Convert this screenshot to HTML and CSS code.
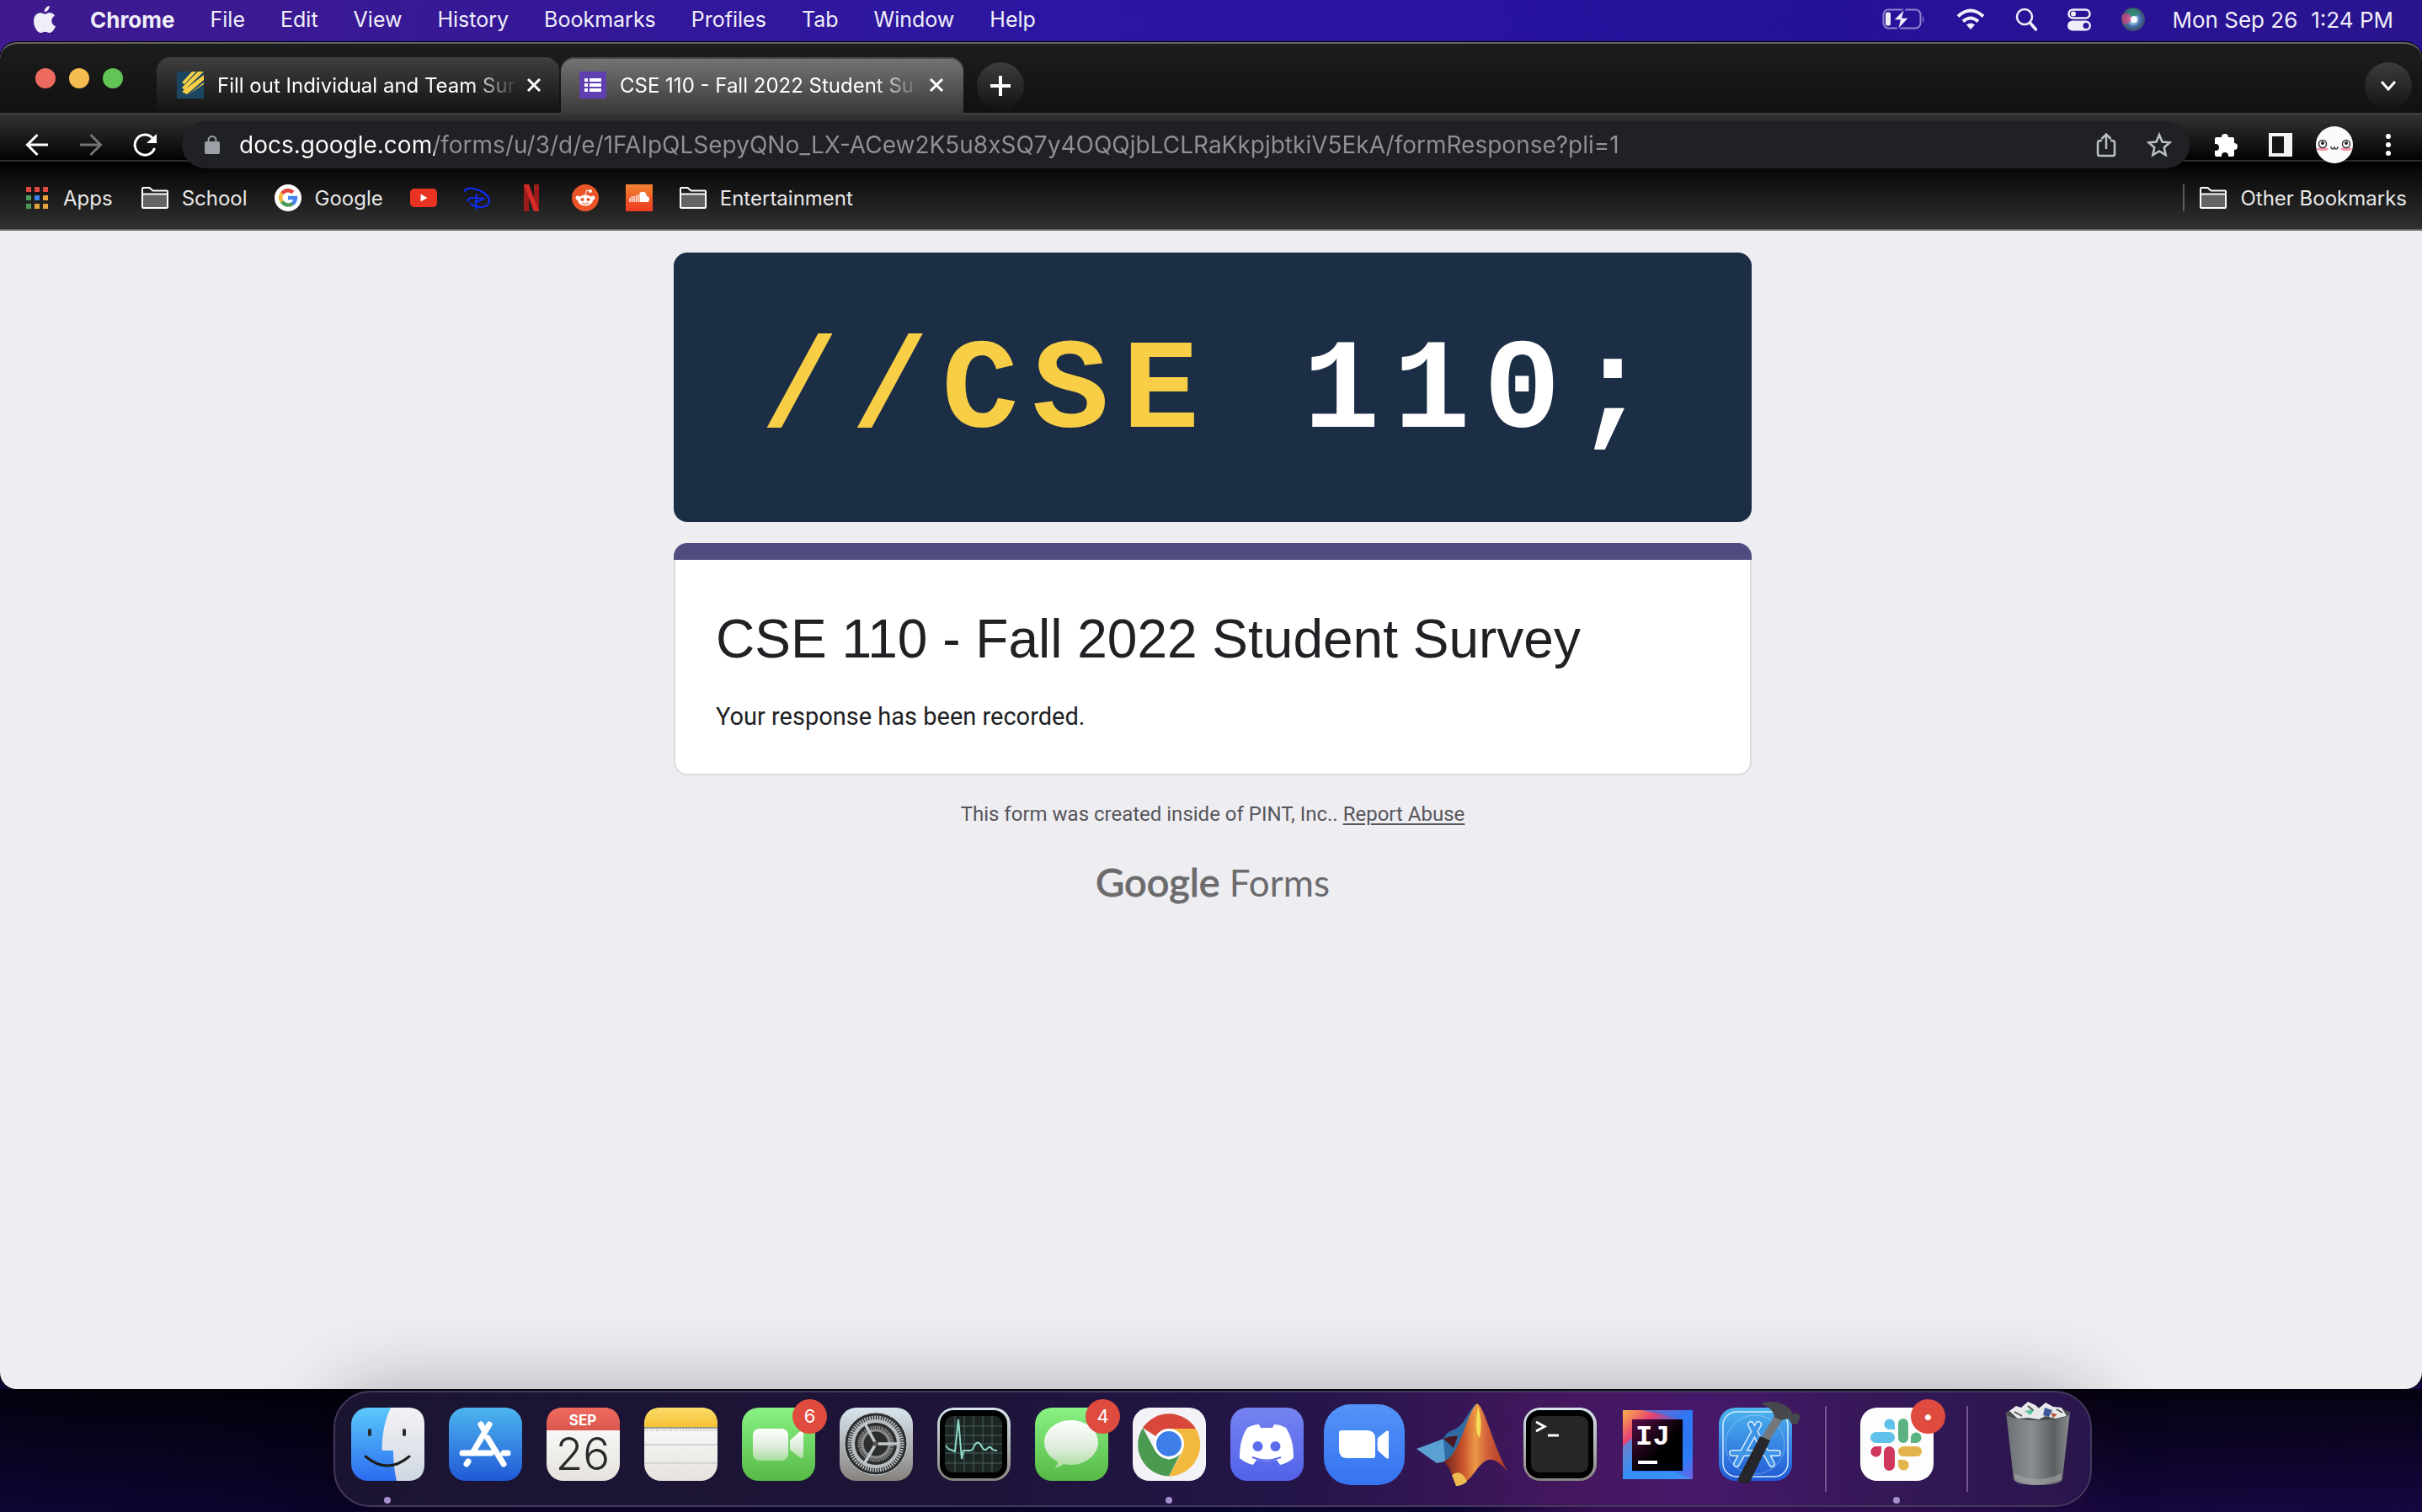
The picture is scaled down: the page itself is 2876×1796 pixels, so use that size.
FILE: index.html
```html
<!DOCTYPE html>
<html lang="en">
<head>
<meta charset="utf-8">
<title>CSE 110 - Fall 2022 Student Survey</title>
<link rel="stylesheet" href="styles.css">
</head>
<body>
<svg class="defs" aria-hidden="true">
  <defs>
    <linearGradient id="g-finder" x2="0" y2="1"><stop stop-color="#5bc9fb"/><stop offset="1" stop-color="#2b6cf0"/></linearGradient>
    <linearGradient id="g-silver" x2="0" y2="1"><stop stop-color="#f3f3f5"/><stop offset="1" stop-color="#d0d7e2"/></linearGradient>
    <linearGradient id="g-store" x2="0" y2="1"><stop stop-color="#4db5ee"/><stop offset="1" stop-color="#2059d6"/></linearGradient>
    <linearGradient id="g-red" x2="0" y2="1"><stop stop-color="#f06a5e"/><stop offset="1" stop-color="#d9584f"/></linearGradient>
    <linearGradient id="g-paper" x2="0" y2="1"><stop stop-color="#ffffff"/><stop offset="1" stop-color="#e6e3de"/></linearGradient>
    <linearGradient id="g-yellow" x2="0" y2="1"><stop stop-color="#fadb6a"/><stop offset="1" stop-color="#f5c136"/></linearGradient>
    <linearGradient id="g-green" x2="0" y2="1"><stop stop-color="#88f283"/><stop offset="1" stop-color="#57b946"/></linearGradient>
    <linearGradient id="g-cam" x2="0" y2="1"><stop stop-color="#ffffff"/><stop offset=".6" stop-color="#dcebd9"/><stop offset="1" stop-color="#a8dd9c"/></linearGradient>
    <linearGradient id="g-metal" x2="0" y2="1"><stop stop-color="#d9e6ee"/><stop offset="1" stop-color="#87827e"/></linearGradient>
    <linearGradient id="g-discord" x2="0" y2="1"><stop stop-color="#7583f0"/><stop offset="1" stop-color="#5262ea"/></linearGradient>
    <linearGradient id="g-zoom" x2="0" y2="1"><stop stop-color="#5294f8"/><stop offset="1" stop-color="#3573f0"/></linearGradient>
    <linearGradient id="g-matlab"><stop stop-color="#6b2320"/><stop offset=".3" stop-color="#c8512c"/><stop offset=".5" stop-color="#eb9a45"/><stop offset=".68" stop-color="#d2603a"/><stop offset="1" stop-color="#a83225"/></linearGradient>
    <linearGradient id="g-ij" x2="1" y2="1"><stop stop-color="#f9b54a"/><stop offset=".25" stop-color="#e83f72"/><stop offset=".5" stop-color="#2c6ff2"/><stop offset=".8" stop-color="#2a7cf5"/><stop offset="1" stop-color="#6f62e8"/></linearGradient>
    <linearGradient id="g-ijin" x2="1" y2="1"><stop stop-color="#560c45"/><stop offset=".6" stop-color="#000"/></linearGradient>
    <linearGradient id="g-can"><stop stop-color="#6d7073"/><stop offset=".4" stop-color="#8b8e90"/><stop offset=".75" stop-color="#5c5f61"/><stop offset="1" stop-color="#8a8d90"/></linearGradient>
    <linearGradient id="g-sound" x2="0" y2="1"><stop stop-color="#f28431"/><stop offset="1" stop-color="#ee3a22"/></linearGradient>
    <radialGradient id="g-siri"><stop stop-color="#fff"/><stop offset=".25" stop-color="#a9d4ee"/><stop offset=".6" stop-color="#4a6fae"/><stop offset="1" stop-color="#3a4a66"/></radialGradient>
    <symbol id="folder" viewBox="0 0 32 32"><path d="M1 27V5q0-1 1-1h7.500l4 3.500H30q1 0 1 1V27q0 1-1 1H2q-1 0-1-1z" fill="#1c1c1c" stroke="#fff" stroke-width="2"/><path d="M2 12h28v15H2z" fill="#636363"/><path d="M1 11.500h30" stroke="#fff" stroke-width="2"/></symbol>
    <symbol id="close" viewBox="0 0 20 20"><path d="M3 3l14 14M17 3L3 17" stroke="#fff" stroke-width="3"/></symbol>
  </defs>
</svg>

<header class="menubar">
  <nav class="menus" aria-label="Menu bar">
    <button class="menu apple" aria-label="Apple menu"><svg width="28" height="34" viewBox="0 0 28 34"><path d="M19.500 9c2.500 0 5 1.200 6.500 3.400-5.400 3.200-4.600 10.600 1 12.900-1.300 3.700-4.300 7.700-7.100 7.700-2 0-2.800-1.300-5.300-1.300S11.200 33 9.300 33C5.400 33 1 25.800 1 19.200 1 12.800 5 9.200 9 9.200c2.400 0 4.200 1.600 5.600 1.600 1.300 0 3-1.800 4.900-1.800zM19.700 1c.4 3.600-2.800 7.300-6 7.200C13.300 4.700 16.500 1.300 19.700 1z" fill="#f0eef8"/></svg></button>
    <button class="menu app-name">Chrome</button>
    <button class="menu">File</button>
    <button class="menu">Edit</button>
    <button class="menu">View</button>
    <button class="menu">History</button>
    <button class="menu">Bookmarks</button>
    <button class="menu">Profiles</button>
    <button class="menu">Tab</button>
    <button class="menu">Window</button>
    <button class="menu">Help</button>
  </nav>
  <div class="status">
    <svg width="52" height="26" viewBox="0 0 52 26"><rect x="1.500" y="1.500" width="44" height="22" rx="6" fill="none" stroke="#8f84cf" stroke-width="2"/><path d="M48 9q3 4 0 8z" fill="#8f84cf"/><rect x="4" y="4.500" width="6" height="16" rx="2" fill="#f0eef8"/><path d="M27 0L13 14h8l-3 12 14-15h-8z" fill="#f0eef8" stroke="#2a149b" stroke-width="1.500"/></svg>
    <svg width="34" height="26" viewBox="0 0 34 26"><g fill="none" stroke="#f0eef8" stroke-width="4"><path d="M2 9.500Q17-4.500 32 9.500"/><path d="M8 15.500q9-8 18 0"/></g><path d="M12 19.500q5-4 10 0l-5 5.500z" fill="#f0eef8"/></svg>
    <svg width="26" height="28" viewBox="0 0 26 28"><circle cx="11" cy="11" r="9" fill="none" stroke="#f0eef8" stroke-width="2.500"/><path d="M17.500 18l7 8" stroke="#f0eef8" stroke-width="3.500" stroke-linecap="round"/></svg>
    <svg width="28" height="28" viewBox="0 0 28 28"><rect x="1.500" y="2.500" width="25" height="10" rx="5" fill="none" stroke="#f0eef8" stroke-width="2.500"/><circle cx="7" cy="7.500" r="3" fill="#f0eef8"/><rect y="15.500" width="28" height="12" rx="6" fill="#f0eef8"/><circle cx="22" cy="21.500" r="3.500" fill="#2a149b"/></svg>
    <svg width="28" height="28" viewBox="0 0 28 28"><circle cx="14" cy="14" r="14" fill="url(#g-siri)"/><path d="M1 9Q8 3 14 14 7 20 3 20 0 15 1 9z" fill="#d0447a" opacity=".75"/><path d="M6 3q10-5 17 4-6 2-9 7z" fill="#2c8a6c" opacity=".8"/><circle cx="15" cy="14" r="4" fill="#fff" opacity=".9"/></svg>
    <time class="clock"><span>Mon Sep 26</span><span>1:24 PM</span></time>
  </div>
</header>

<div class="window">
  <div class="tabstrip">
    <div class="lights"><button class="light red" aria-label="Close window"></button><button class="light amber" aria-label="Minimise"></button><button class="light green" aria-label="Zoom"></button></div>
    <div class="tab">
      <svg width="32" height="32" viewBox="0 0 32 32"><path d="M0 0h32v32H0z" fill="#1a4661"/><path d="M18 0h5L9 15l-3-2zM25 0h7L9 22l-3-3zM32 4v6L12 27l-6-3zM32 13v2L14 27z" fill="#f7ce46"/></svg>
      <button class="tab-title">Fill out Individual and Team Sur</button>
      <button class="icon-btn" aria-label="Close tab"><svg width="20" height="20"><use href="#close"/></svg></button>
    </div>
    <div class="tab active">
      <svg width="32" height="32" viewBox="0 0 32 32"><path d="M0 0h32v32H0z" fill="#603fb0"/><path d="M6 8h4v4H6zM6 14h4v4H6zM6 20h4v4H6zM12 8h14v4H12zM12 14h14v4H12zM12 20h14v4H12z" fill="#fff"/></svg>
      <button class="tab-title">CSE 110 - Fall 2022 Student Su</button>
      <button class="icon-btn" aria-label="Close tab"><svg width="20" height="20"><use href="#close"/></svg></button>
    </div>
    <button class="round new-tab" aria-label="New tab"><svg width="24" height="24" viewBox="0 0 24 24"><path d="M12 0v24M0 12h24" stroke="#fff" stroke-width="4"/></svg></button>
    <button class="round tab-search" aria-label="Search tabs"><svg width="20" height="14" viewBox="0 0 20 14"><path d="M2 2l8 9 8-9" fill="none" stroke="#fff" stroke-width="3"/></svg></button>
  </div>

  <div class="toolbar">
    <div class="nav-buttons">
      <button class="icon-btn" aria-label="Back"><svg width="28" height="28" viewBox="0 0 28 28"><path d="M27 14H3M14.500 2l-12 12 12 12" fill="none" stroke="#fff" stroke-width="3"/></svg></button>
      <button class="icon-btn" aria-label="Forward"><svg width="28" height="28" viewBox="0 0 28 28"><path d="M1 14h24M13.500 2l12 12-12 12" fill="none" stroke="#757575" stroke-width="3"/></svg></button>
      <button class="icon-btn" aria-label="Reload"><svg width="28" height="28" viewBox="0 0 28 28"><path d="M25.500 18A12 12 0 1 1 23 6" fill="none" stroke="#fff" stroke-width="3"/><path d="M28 1v11H16z" fill="#fff"/></svg></button>
    </div>
    <div class="omnibox">
      <svg width="18" height="22" viewBox="0 0 18 22"><rect y="7" width="18" height="15" rx="2" fill="#9aa0a6"/><path d="M4.500 8V5.500a4.500 4.500 0 0 1 9 0V8" fill="none" stroke="#9aa0a6" stroke-width="2"/></svg>
      <input class="url" type="text" aria-label="Address" value="docs.google.com/forms/u/3/d/e/1FAIpQLSepyQNo_LX-ACew2K5u8xSQ7y4OQQjbLCLRaKkpjbtkiV5EkA/formResponse?pli=1">
      <button class="icon-btn" aria-label="Share"><svg width="24" height="30" viewBox="0 0 24 30"><path d="M7 10H5q-3 0-3 3v13q0 2 2 2h16q2 0 2-2V13q0-3-3-3h-2M12 20V3M6.500 8L12 2.500 17.500 8" fill="none" stroke="#bdc1c6" stroke-width="2.500"/></svg></button>
      <button class="icon-btn" aria-label="Bookmark this tab"><svg width="30" height="30" viewBox="0 0 30 30"><path d="M15 3l3.500 8.500 9 .8-6.800 6 2 8.900L15 22.500l-7.700 4.700 2-8.900-6.800-6 9-.8z" fill="none" stroke="#bdc1c6" stroke-width="2.500"/></svg></button>
    </div>
    <div class="tools">
      <button class="icon-btn" aria-label="Extensions"><svg width="28" height="28" viewBox="0 0 28 28"><path d="M8 5a4 4 0 0 1 8 0h5q2 0 2 2v5a4 4 0 0 1 0 8v6q0 2-2 2h-5v-1a4 4 0 0 0-8 0v1H2q-2 0-2-2v-5h1a4 4 0 0 0 0-8H0V7q0-2 2-2z" fill="#fff"/></svg></button>
      <button class="icon-btn" aria-label="Side panel"><svg width="28" height="28" viewBox="0 0 28 28"><path d="M0 0h28v28H0z" fill="#f1f3f4"/><path d="M4 4h14v20H4z" fill="#151515"/></svg></button>
      <button class="icon-btn" aria-label="Profile"><svg width="44" height="44" viewBox="0 0 44 44"><circle cx="22" cy="22" r="22" fill="#fbfafa"/><g fill="#f597ab"><ellipse cx="8" cy="27" rx="7" ry="2"/><ellipse cx="36" cy="27" rx="7" ry="2"/></g><g fill="#fff" stroke="#333" stroke-width="1.500"><circle cx="8" cy="21" r="4.500"/><circle cx="36" cy="21" r="4.500"/></g><circle cx="8" cy="20" r="2" fill="#222"/><circle cx="36" cy="20" r="2" fill="#222"/><path d="M18 24q0 3 2 3t2-3q0 3 2 3t2-3" fill="none" stroke="#444" stroke-width="1.500"/></svg></button>
      <button class="icon-btn" aria-label="Menu"><svg width="6" height="28" viewBox="0 0 6 28"><g fill="#fff"><circle cx="3" cy="4" r="3"/><circle cx="3" cy="14" r="3"/><circle cx="3" cy="24" r="3"/></g></svg></button>
    </div>
  </div>

  <nav class="bookmarks" aria-label="Bookmarks">
    <a class="bookmark" href="#"><svg width="28" height="26" viewBox="0 0 28 26"><path d="M0 0h6v6H0zM10 0h6v6h-6zM20 0h6v6h-6z" fill="#e2483d"/><path d="M0 10h6v6H0zM0 20h6v6H0z" fill="#4b9b57"/><path d="M10 10h6v6h-6z" fill="#3f82ee"/><path d="M20 10h6v6h-6zM10 20h6v6h-6zM20 20h6v6h-6z" fill="#e5a23a"/></svg>Apps</a>
    <a class="bookmark" href="#"><svg width="32" height="32"><use href="#folder"/></svg>School</a>
    <a class="bookmark" href="#"><svg width="32" height="32" viewBox="0 0 32 32"><circle cx="16" cy="16" r="16" fill="#fff"/><g fill="none" stroke-width="4.500"><path d="M9 11a8.800 8.800 0 0 1 13-1.500" stroke="#e2483d"/><path d="M9 21a9 9 0 0 1 0-10.500" stroke="#f3b93b"/><path d="M22 22.500A9 9 0 0 1 8.800 20.500" stroke="#4b9b57"/><path d="M16 16h9q0 4-3.500 7" stroke="#4685f0"/></g></svg>Google</a>
    <a class="bookmark" href="#" aria-label="YouTube"><svg width="32" height="32" viewBox="0 0 32 32"><rect y="5" width="32" height="22" rx="5" fill="#ea3323"/><path d="M12.500 11.500v9l8-4.500z" fill="#fff"/></svg></a>
    <a class="bookmark" href="#" aria-label="Disney+"><svg width="32" height="32" viewBox="0 0 32 32"><path d="M1 8C3 2 15 5 22 9c11 7 11 17-2 18-5 0-9-1-12-4M5 20q-1-4 6-4 6 0 13 1M15 12q-2 8 0 17M15 21l6-3" fill="none" stroke="#0f2cf0" stroke-width="2.200" stroke-linecap="round"/></svg></a>
    <a class="bookmark" href="#" aria-label="Netflix"><svg width="32" height="32" viewBox="0 0 32 32"><path d="M7 0h6v32H7zM19 0h6v32h-6z" fill="#9c1c1c"/><path d="M7 0h6l12 32h-6z" fill="#d42a28"/></svg></a>
    <a class="bookmark" href="#" aria-label="Reddit"><svg width="32" height="32" viewBox="0 0 32 32"><circle cx="16" cy="16" r="16" fill="#ec5528"/><g fill="#fff"><ellipse cx="16" cy="19" rx="9" ry="6.500"/><circle cx="7" cy="16" r="2.500"/><circle cx="25" cy="16" r="2.500"/><circle cx="22" cy="8" r="2"/></g><path d="M16 13l1.500-6 4 1" fill="none" stroke="#fff"/><g fill="#ec5528"><circle cx="12.500" cy="18" r="2"/><circle cx="19.500" cy="18" r="2"/></g><path d="M12 22q4 3 8 0" fill="none" stroke="#ec5528"/></svg></a>
    <a class="bookmark" href="#" aria-label="SoundCloud"><svg width="32" height="32" viewBox="0 0 32 32"><path d="M0 0h32v32H0z" fill="url(#g-sound)"/><path d="M5 21v-5M7.500 21v-7M10 21v-7M12.500 21v-8M15 21v-9" stroke="#fff" stroke-width="1.300"/><path d="M16.500 21V10q7-4 8.500 4 3 0 3 3.500T25 21z" fill="#fff"/></svg></a>
    <a class="bookmark" href="#"><svg width="32" height="32"><use href="#folder"/></svg>Entertainment</a>
    <a class="bookmark other" href="#"><svg width="32" height="32"><use href="#folder"/></svg>Other Bookmarks</a>
  </nav>

  <main class="page">
    <div class="banner"><p class="banner-text"><span>//CSE</span> 110;</p></div>
    <section class="card">
      <div class="stripe"></div>
      <div class="card-body">
        <h1>CSE 110 - Fall 2022 Student Survey</h1>
        <p>Your response has been recorded.</p>
      </div>
    </section>
    <p class="notice">This form was created inside of PINT, Inc.. <a href="#">Report Abuse</a></p>
    <p class="logo"><span class="brand">Google</span> Forms</p>
  </main>
</div>

<nav class="dock" aria-label="Dock">
  <button class="app running" aria-label="Finder"><svg viewBox="0 0 116 116"><rect x="15" y="14" width="87" height="87" rx="20" fill="url(#g-finder)"/><path d="M62 14h20q20 0 20 20v47q0 20-20 20H69Q65 85 65 65H53q-2 0-1.500-3Q52 34 62 14z" fill="url(#g-silver)"/><path d="M37 41v5M78 41v5" stroke="#2a2a2a" stroke-width="4" stroke-linecap="round"/><path d="M32 72q26 22 52 0" fill="none" stroke="#1c1c1c" stroke-width="3" stroke-linecap="round"/></svg></button>
  <button class="app" aria-label="App Store"><svg viewBox="0 0 116 116"><rect x="15" y="14" width="87" height="87" rx="20" fill="url(#g-store)"/><g stroke="#fff" stroke-width="7" stroke-linecap="round"><path d="M63 34L43 68M38 78l-2 3M53 34l4 7M61 50l19 31M31 68h34M80 68h5"/></g></svg></button>
  <button class="app" aria-label="Calendar"><svg viewBox="0 0 116 116"><rect x="15" y="14" width="87" height="87" rx="20" fill="url(#g-paper)"/><path d="M15 41v-7q0-20 20-20h47q20 0 20 20v7z" fill="url(#g-red)"/><text x="58" y="35" class="cal-month">SEP</text><text x="58" y="88" class="cal-day">26</text></svg></button>
  <button class="app" aria-label="Notes"><svg viewBox="0 0 116 116"><rect x="15" y="14" width="87" height="87" rx="20" fill="url(#g-paper)"/><path d="M15 37v-3q0-20 20-20h47q20 0 20 20v3z" fill="url(#g-yellow)"/><path d="M15 38h87" stroke="#9d9a92" stroke-width="2"/><path d="M15 41h87" stroke="#b5b3ae" stroke-width="1.500" stroke-dasharray="1.500 2"/><path d="M15 58h87M15 80h87" stroke="#d3d3d5" stroke-width="2"/></svg></button>
  <button class="app" aria-label="FaceTime"><svg viewBox="0 0 116 116"><rect x="15" y="14" width="87" height="87" rx="20" fill="url(#g-green)"/><rect x="28" y="39" width="42" height="38" rx="8" fill="url(#g-cam)"/><path d="M72 53l11-10q5-3 5 2v27q0 4-5 1l-11-9z" fill="url(#g-cam)"/></svg><span class="badge">6</span></button>
  <button class="app" aria-label="System Preferences"><svg viewBox="0 0 116 116"><rect x="15" y="14" width="87" height="87" rx="20" fill="url(#g-metal)"/><circle cx="58" cy="57" r="37" fill="#2b2d2e"/><g fill="none"><circle cx="58" cy="57" r="31" stroke="#b9bdbf" stroke-width="5" stroke-dasharray="1.700 1.300"/><circle cx="58" cy="57" r="27" stroke="#b9bdbf" stroke-width="4"/><circle cx="58" cy="57" r="19" stroke="#8a8c8d" stroke-width="5" stroke-dasharray="1.500 1"/><circle cx="58" cy="57" r="16" stroke="#8a8c8d" stroke-width="3"/></g><path d="M58 57h27M58 57L45 33M58 57L44 81" stroke="#c3c7c9" stroke-width="3.500"/><circle cx="58" cy="57" r="3" fill="#555"/><circle cx="58" cy="57" r="37" fill="none" stroke="#c9ced0" stroke-width="1"/></svg></button>
  <button class="app" aria-label="Activity Monitor"><svg viewBox="0 0 116 116"><rect x="15" y="14" width="87" height="87" rx="20" fill="url(#g-metal)"/><rect x="18" y="17" width="80" height="81" rx="16" fill="#000"/><rect x="24" y="24" width="68" height="67" rx="9" fill="#1d2625"/><path d="M36 24v67M47 24v67M58 24v67M69 24v67M80 24v67M24 36h68M24 47h68M24 57h68M24 68h68M24 80h68" stroke="#47615a"/><path d="M25 59l3 4 8 3 4-38 4 47 2-10h8q3 0 5-6 4-7 8 0 3 6 6 5 4-5 6-2t7 3" fill="none" stroke="#8fd9c7" stroke-width="2"/></svg></button>
  <button class="app" aria-label="Messages"><svg viewBox="0 0 116 116"><rect x="15" y="14" width="87" height="87" rx="20" fill="url(#g-green)"/><path d="M58 29c18 0 32 12 32 26S76 82 58 82q-5 0-9-1-5 4-11 5 4-4 4-8C32 73 26 65 26 55c0-14 14-26 32-26z" fill="url(#g-cam)"/></svg><span class="badge">4</span></button>
  <button class="app running" aria-label="Chrome"><svg viewBox="0 0 116 116"><rect x="15" y="14" width="87" height="87" rx="20" fill="#f3f2f6"/><path d="M58 58L27 38a37.500 37.500 0 0 1 63 1z" fill="#d8473a"/><path d="M58 39h32a37.500 37.500 0 0 1-32 56.500L74 66z" fill="#f3b93f"/><path d="M27 38l15 28 16 10 14-8-14 27.500A37.500 37.500 0 0 1 27 38z" fill="#4b9a52"/><circle cx="58" cy="57" r="18" fill="#fff"/><circle cx="58" cy="57" r="15" fill="#3d7ee8"/></svg></button>
  <button class="app" aria-label="Discord"><svg viewBox="0 0 116 116"><rect x="15" y="14" width="87" height="87" rx="20" fill="url(#g-discord)"/><path d="M35 38q7-4 14-4l2 4h14l2-4q7 0 14 4c7 11 9 22 9 36q-7 6-16 8l-4-6q-12 3-24 0l-4 6q-9-2-16-8c0-14 2-25 9-36z" fill="#fff"/><path d="M41 73q17 7 34 0" stroke="#5c6bec" stroke-width="2" fill="none"/><circle cx="47.500" cy="60" r="6" fill="#5c6bec"/><circle cx="68.500" cy="60" r="6" fill="#5c6bec"/></svg></button>
  <button class="app" aria-label="Zoom"><svg viewBox="0 0 116 116"><rect x="10" y="10" width="96" height="96" rx="32" fill="url(#g-zoom)"/><path d="M31 41h30q10 0 10 10v20q0 3-3 3H38q-10 0-10-10V44q0-3 3-3zM74 50l10-8q3-2 3 1v30q0 3-3 1l-10-9q-1-8 0-15z" fill="#fff"/></svg></button>
  <button class="app" aria-label="MATLAB"><svg viewBox="0 0 116 116"><path d="M4 63l32-12 12-1L38 78l-10 2z" fill="#5aa0d3"/><path d="M36 51q4-9 13-11C62 35 68 12 76 9L56 66 38 78z" fill="#2e6ca4"/><path d="M36 51q9-4 17-3l-5 14z" fill="#4a1820"/><path d="M76 9c9 4 19 50 36 81-10-12-18-18-27-12-12 8-15 25-34 29Q44 84 36 78C56 72 64 18 76 9z" fill="url(#g-matlab)"/><path d="M46 94q12-8 18 8-6 5-13 5z" fill="#efbd4f"/><path d="M77 12q6 18 2 38-7-6-2-38z" fill="#f5dd55"/></svg></button>
  <button class="app" aria-label="Terminal"><svg viewBox="0 0 116 116"><rect x="15" y="14" width="87" height="87" rx="20" fill="url(#g-metal)"/><rect x="18" y="17" width="80" height="81" rx="16" fill="#000"/><rect x="24" y="24" width="68" height="67" rx="9" fill="#262626"/><path d="M30 31l10 5.500L30 42M44 47h13" fill="none" stroke="#fff" stroke-width="3"/></svg></button>
  <button class="app" aria-label="IntelliJ IDEA"><svg viewBox="0 0 116 116"><path d="M17 17h83v82H17z" fill="url(#g-ij)"/><path d="M40 17h60v40L88 28z" fill="#2f7bf5" opacity=".7"/><path d="M17 60l11-10v40h50l22 9H17z" fill="#3b9cf4" opacity=".7"/><path d="M28 28h60v61H28z" fill="url(#g-ijin)"/><path d="M35 77h23v4H35z" fill="#fff"/><text x="32" y="58" class="ij">IJ</text></svg></button>
  <button class="app" aria-label="Xcode"><svg viewBox="0 0 116 116"><rect x="15" y="14" width="87" height="87" rx="20" fill="url(#g-store)"/><g fill="none" stroke="#d5ecff"><rect x="20" y="19" width="77" height="77" rx="16" stroke-width="1.500"/><circle cx="58" cy="58" r="35" opacity=".4"/></g><g stroke="#d5ecff" stroke-width="8" stroke-linecap="round"><path d="M62 34L36 81M53 34l25 47M31 68h54"/></g><g stroke="#3f94e6" stroke-width="5" stroke-linecap="round"><path d="M62 34L36 81M53 34l25 47M31 68h54"/></g><path d="M82 22l10 4-18 29-9-4z" fill="#74777c"/><path d="M64 48l12 5-24 49q-7 6-15-2z" fill="#25262b"/><path d="M64 9q22-6 36 7l3 6 4-2 5 4-4 10-7-1-3-6-9 2-8-4q-1-10-17-16z" fill="#46484d"/></svg></button>
  <hr class="divider">
  <button class="app running" aria-label="Slack"><svg viewBox="0 0 116 116"><rect x="15" y="14" width="87" height="87" rx="20" fill="#fdfdfd"/><path d="M56 40h-6a6.300 6.300 0 1 1 6-6z" fill="#60c1ea"/><rect x="27" y="43" width="29" height="13" rx="6.500" fill="#60c1ea"/><rect x="60" y="27" width="12" height="29" rx="6" fill="#5bb381"/><path d="M75 56v-6a6.300 6.300 0 1 1 6 6z" fill="#5bb381"/><path d="M40 60v6a6.300 6.300 0 1 1-6-6z" fill="#cf375c"/><rect x="43" y="60" width="13" height="29" rx="6.500" fill="#cf375c"/><rect x="60" y="60" width="28" height="12" rx="6" fill="#e3b34c"/><path d="M60 76h6a6.300 6.300 0 1 1-6 6z" fill="#e3b34c"/></svg><span class="badge">•</span></button>
  <hr class="divider">
  <button class="app" aria-label="Bin"><svg viewBox="0 0 116 116"><path d="M20 19h76l-9 80q-2 7-29 7t-29-7z" fill="url(#g-can)"/><ellipse cx="58" cy="21" rx="38" ry="8" fill="#4b4e50"/><path d="M24 18l8-6 6 2 8-7 9 4 4 4 8-7 9 5 10 1 6 10-13 3-12-3-8 4-13-2-12 1z" fill="#e9e9ea"/><path d="M42 18l12-2-5 7z" fill="#59c3a0"/><path d="M66 14l9 3-4 8-7-2z" fill="#3d5b9a"/><path d="M73 20l8 2-5 4z" fill="#b4553a"/><path d="M30 19l9 5M46 12l6 5M80 16l7 4" stroke="#555" stroke-width="2"/><path d="M30 92q28 14 56 0l-1 8q-27 11-54 0z" fill="#a3a6a8" opacity=".6"/></svg></button>
</nav>
</body>
</html>
```
FILE: styles.css
```css
* { box-sizing: border-box; }

html, body { height: 100%; }

body {
  margin: 0;
  display: flex;
  flex-direction: column;
  align-items: stretch;
  overflow: hidden;
  font-family: Inter, "Liberation Sans", sans-serif;
  color: #fff;
  background:
    linear-gradient(90deg, #3f1a8e 0, #2b16a2 45%, #25129a 75%, #2a148f 100%) top / 100% 120px no-repeat,
    linear-gradient(rgba(0, 0, 0, 0.75), transparent) bottom / 100% 146px no-repeat,
    linear-gradient(90deg, #0f0534 0, #0c042a 14%, #0d0538 60%, #421063 66%, #3b1160 78%, #14073e 88%, #150640 100%);
}

button {
  margin: 0;
  padding: 0;
  border: 0;
  background: none;
  color: inherit;
  font: inherit;
}

svg { display: block; flex: none; }
p, h1 { margin: 0; }

.defs { position: absolute; width: 0; height: 0; }

/* Menu bar */
.menubar {
  flex: none;
  display: flex;
  justify-content: space-between;
  height: 50px;
  padding: 0 34px 4px 39px;
  font-size: 25px;
  color: #f0eef8;
}

.menus { display: flex; align-items: center; gap: 42px; }
.menu.apple { margin-right: -2px; }
.app-name { font-size: 26px; font-weight: 700; }
.status { display: flex; align-items: center; gap: 36px; }
.clock { display: flex; gap: 16px; margin-left: -4px; font-size: 26px; }

/* Browser window */
.window {
  flex: 1;
  display: flex;
  flex-direction: column;
  border-top: 2px solid #646464;
  border-radius: 20px;
  overflow: hidden;
  background: #eeedf2;
  box-shadow: 0 0 0 1px #000;
}

.tabstrip {
  flex: none;
  display: flex;
  align-items: flex-end;
  height: 84px;
  padding: 0 12px 0 42px;
  border-bottom: 2px solid #404040;
  background: linear-gradient(#1d1d1d, #111);
  font-size: 24px;
}

.lights { display: flex; gap: 16px; margin-right: 40px; align-self: center; }
.light { width: 24px; height: 24px; border-radius: 50%; }
.light.red { background: #ec6a5e; }
.light.amber { background: #f4bd4f; }
.light.green { background: #61c454; }

.tab {
  display: flex;
  align-items: center;
  width: 478px;
  height: 66px;
  padding: 0 20px 0 24px;
  border-radius: 16px 16px 0 0;
  background: linear-gradient(#3f3f3f, #121212);
}

.tab.active {
  height: 68px;
  margin: 0 0 -2px 2px;
  padding: 0 22px 2px 22px;
  box-shadow: inset 0 2px #4a4a4a;
  background: linear-gradient(#757575, #383838);
}

.tab-title {
  flex: 1;
  margin: 0 8px 0 16px;
  white-space: nowrap;
  text-align: left;
  -webkit-mask-image: linear-gradient(90deg, #000 84%, transparent);
  mask-image: linear-gradient(90deg, #000 84%, transparent);
}

.icon-btn { display: grid; place-items: center; }

.round {
  display: grid;
  place-items: center;
  width: 56px;
  height: 56px;
  margin-bottom: 4px;
  border-radius: 50%;
  background: linear-gradient(#3c3c3c, #141414);
}

.new-tab { margin-left: 16px; }
.tab-search { margin-left: auto; }

/* Toolbar */
.toolbar {
  flex: none;
  display: flex;
  align-items: center;
  height: 72px;
  padding: 0 37px 0 30px;
  background:
    linear-gradient(#2b2b2b, #2b2b2b) 0 54px / 100% 2px no-repeat,
    linear-gradient(#333 0, #000 56px, #0c0c0c);
}

.nav-buttons { display: flex; gap: 36px; margin-right: 30px; }

.omnibox {
  flex: 1;
  display: flex;
  align-items: center;
  height: 56px;
  padding: 0 21px 0 27px;
  border-radius: 28px;
  background: #202124;
  gap: 36px;
}

.url {
  flex: 1;
  min-width: 0;
  height: 56px;
  margin-left: -13px;
  padding: 0;
  border: 0;
  outline: 0;
  font: 28px Inter, "Liberation Sans", sans-serif;
  color: transparent;
  background: linear-gradient(90deg, #fff 232px, #8f9194 232px);
  -webkit-background-clip: text;
  background-clip: text;
}

.tools { display: flex; align-items: center; gap: 36px; margin-left: 30px; }
.tools .icon-btn:nth-child(3) { margin: 0 3px 0 -8px; }

/* Bookmarks bar */
.bookmarks {
  flex: none;
  display: flex;
  align-items: center;
  gap: 32px;
  height: 66px;
  padding: 0 18px 10px 31px;
  border-bottom: 2px solid #66636a;
  background: linear-gradient(#0c0c0c, #303030);
  font-size: 24px;
}

.bookmark {
  display: flex;
  align-items: center;
  gap: 16px;
  color: #e8e8e8;
  text-decoration: none;
}

.bookmark:first-child { padding-right: 2px; }
.other { margin-left: auto; padding-left: 18px; border-left: 2px solid #5c5c5c; }

/* Form page */
.page {
  flex: 1;
  display: flex;
  flex-direction: column;
  align-items: center;
  padding: 26px 0 0 4px;
  color: #202124;
  font-family: Roboto, "Liberation Sans", sans-serif;
}

.banner {
  display: flex;
  justify-content: center;
  width: 1280px;
  max-width: 100%;
  padding: 77px 0 63px;
  border-radius: 16px;
  background: #1c2d46;
  color: #fff;
}

.banner-text {
  font: 700 152px "Liberation Mono", monospace;
  letter-spacing: 16px;
  line-height: 180px;
  white-space: pre;
}

.banner-text span { color: #f7ce46; }

.card {
  width: 1280px;
  max-width: 100%;
  margin-top: 25px;
  border-radius: 16px;
  overflow: hidden;
  background: #dadae0;
}

.stripe { height: 20px; background: #4f4d7f; }

.card-body {
  margin: 0 2px 2px;
  padding: 54px 48px 48px;
  border-radius: 0 0 14px 14px;
  background: #fff;
}

.card h1 {
  font: 400 64px/80px "Liberation Sans", Arial, sans-serif;
}

.card p { margin-top: 32px; font-size: 29px; line-height: 40px; }

.notice { margin-top: 26px; font-size: 24px; line-height: 40px; color: #56565a; }
.notice a { color: inherit; text-underline-offset: 3px; }

.logo {
  margin-top: 30px;
  font: 400 44px/60px Lato, "Open Sans", sans-serif;
  color: #6b6b6e;
}

.brand { font-size: 47px; -webkit-text-stroke: 1px #6b6b6e; }

/* Dock */
.dock {
  position: relative;
  flex: none;
  align-self: center;
  display: flex;
  align-items: flex-start;
  height: 138px;
  margin: 2px 0 6px 4px;
  padding: 4px;
  border: 2px solid #44395c;
  border-radius: 44px;
  background: linear-gradient(90deg, #1b1431 0, #1d1438 35%, #25154a 56%, #44175f 70%, #46186a 78%, #351858 88%, #29164c 100%);
  box-shadow: 0 0 90px rgba(0, 0, 0, 0.3);
}

.app { position: relative; width: 116px; height: 116px; }
.app svg { width: 116px; height: 116px; }

.running::after {
  content: "";
  position: absolute;
  left: 54px;
  bottom: -12px;
  width: 8px;
  height: 8px;
  border-radius: 50%;
  background: #a590cc;
}

.badge {
  position: absolute;
  top: 4px;
  right: 0;
  width: 41px;
  height: 41px;
  border-radius: 50%;
  background: #df4b3e;
  font-size: 22px;
  line-height: 41px;
  text-align: center;
}

.divider {
  width: 2px;
  height: 102px;
  margin: 12px 25px 0;
  border: 0;
  background: #76558f;
}

.cal-month { font: 700 17px Inter, sans-serif; fill: #fff; text-anchor: middle; }
.cal-day { font: 300 53px Inter, sans-serif; fill: #2a2a2a; text-anchor: middle; }
.ij { font: 700 34px "Liberation Mono", monospace; fill: #fff; }
```
